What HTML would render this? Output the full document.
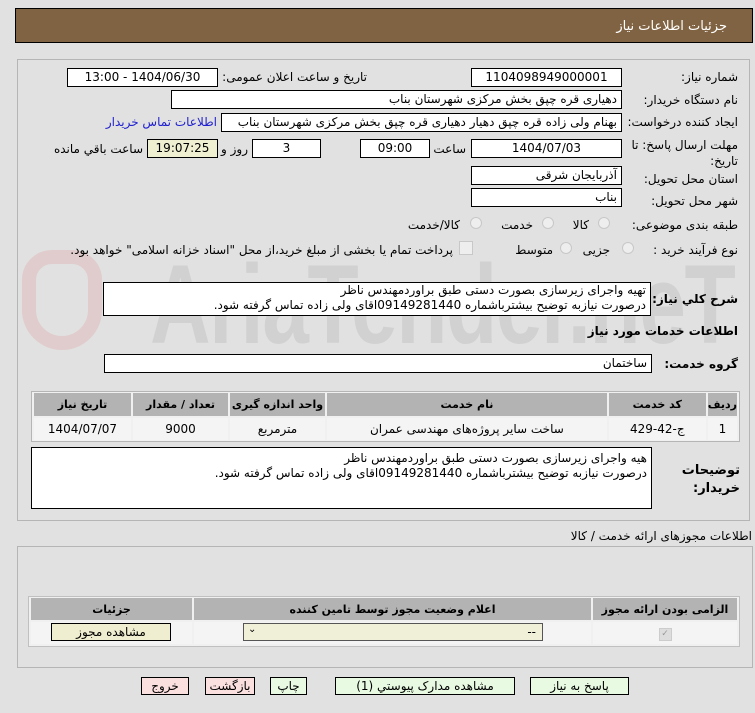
<!DOCTYPE html>
<html><head><meta charset="utf-8"><style>
body{margin:0;width:755px;height:713px;background:#e1e1e1;font-family:"DejaVu Sans","Liberation Sans",sans-serif;font-size:12px;color:#000;position:relative;overflow:hidden}
.a{position:absolute}
.f{position:absolute;background:#fff;border:1px solid #000;box-sizing:border-box;height:19px;line-height:17px;direction:rtl;padding:0 4px;white-space:nowrap;overflow:hidden}
.c{text-align:center}
.l{position:absolute;direction:rtl;white-space:nowrap;text-align:right}
.r{position:absolute;width:12px;height:12px;border-radius:50%;border:1px solid #c8c8c8;background:#eee;box-sizing:border-box}
.btn{position:absolute;border:1px solid #000;box-sizing:border-box;height:18px;line-height:16px;text-align:center;background:#e8fbe2;white-space:nowrap}
table{border-collapse:separate;border-spacing:2px;direction:rtl}
td,th{padding:0;text-align:center}
</style></head><body>
<div class="a" style="left:15px;top:8px;width:738px;height:35px;background:#806342;border:1px solid #000;box-sizing:border-box"></div>
<div class="l" style="right:28px;top:19px;color:#fff;font-size:13px">جزئیات اطلاعات نیاز</div>

<div class="a" style="left:17px;top:59px;width:733px;height:462px;border:1px solid #b5b5b5;box-sizing:border-box"></div>
<div class="a" style="left:150px;top:240px;font-size:112px;font-family:'Liberation Sans',sans-serif;font-weight:bold;color:rgba(0,0,0,0.07);letter-spacing:-2px;transform:scaleX(0.75);transform-origin:left">AriaTender.neT</div>
<div class="a" style="left:22px;top:250px;width:80px;height:100px;border:14px solid rgba(220,60,60,0.12);border-radius:30px 30px 40px 40px;box-sizing:border-box"></div>

<div class="l" style="right:17px;top:70px">شماره نیاز:</div>
<div class="f c" style="left:471px;top:68px;width:151px">1104098949000001</div>
<div class="l" style="right:388px;top:70px">تاریخ و ساعت اعلان عمومی:</div>
<div class="f c" style="left:67px;top:68px;width:151px">1404/06/30 - 13:00</div>

<div class="l" style="right:17px;top:93px">نام دستگاه خریدار:</div>
<div class="f" style="left:171px;top:90px;width:451px">دهیاری قره چپق بخش مرکزی شهرستان بناب</div>

<div class="l" style="right:17px;top:115px">ایجاد کننده درخواست:</div>
<div class="f" style="left:221px;top:113px;width:401px">بهنام ولی زاده قره چپق دهیار دهیاری قره چپق بخش مرکزی شهرستان بناب</div>
<div class="l" style="right:538px;top:115px;color:#2020d0">اطلاعات تماس خریدار</div>

<div class="l" style="right:17px;top:137px;line-height:16px">مهلت ارسال پاسخ: تا<br>تاریخ:</div>
<div class="f c" style="left:471px;top:139px;width:151px">1404/07/03</div>
<div class="l" style="right:289px;top:142px">ساعت</div>
<div class="f c" style="left:360px;top:139px;width:70px">09:00</div>
<div class="f c" style="left:252px;top:139px;width:69px">3</div>
<div class="l" style="right:507px;top:142px">روز و</div>
<div class="f c" style="left:147px;top:139px;width:71px;background:#efefd2">19:07:25</div>
<div class="l" style="right:612px;top:142px">ساعت باقي مانده</div>

<div class="l" style="right:17px;top:172px">استان محل تحویل:</div>
<div class="f" style="left:471px;top:166px;width:151px">آذربایجان شرقی</div>
<div class="l" style="right:17px;top:194px">شهر محل تحویل:</div>
<div class="f" style="left:471px;top:188px;width:151px">بناب</div>

<div class="l" style="right:17px;top:218px">طبقه بندی موضوعی:</div>
<div class="r" style="left:598px;top:217px"></div><div class="l" style="right:166px;top:218px">کالا</div>
<div class="r" style="left:542px;top:217px"></div><div class="l" style="right:222px;top:218px">خدمت</div>
<div class="r" style="left:470px;top:217px"></div><div class="l" style="right:295px;top:218px">کالا/خدمت</div>

<div class="l" style="right:17px;top:243px">نوع فرآیند خرید :</div>
<div class="r" style="left:622px;top:242px"></div><div class="l" style="right:145px;top:243px">جزیی</div>
<div class="r" style="left:560px;top:242px"></div><div class="l" style="right:202px;top:243px">متوسط</div>
<div class="a" style="left:459px;top:241px;width:12px;height:12px;border:1px solid #c8c8c8;background:#eee"></div>
<div class="l" style="right:302px;top:243px">پرداخت تمام یا بخشی از مبلغ خرید،از محل "اسناد خزانه اسلامی" خواهد بود.</div>

<div class="l" style="right:17px;top:292px;font-weight:bold;font-size:12px">شرح کلي نیاز:</div>
<div class="f" style="left:103px;top:282px;width:548px;height:34px;line-height:15px;white-space:normal">تهیه واجرای زیرسازی بصورت دستی طبق براوردمهندس ناظر<br>درصورت نیازبه توضیح بیشترباشماره 09149281440اقای ولی زاده تماس گرفته شود.</div>
<div class="l" style="right:17px;top:324px;font-weight:bold;font-size:12px">اطلاعات خدمات مورد نیاز</div>
<div class="l" style="right:17px;top:357px;font-weight:bold;font-size:12px">گروه خدمت:</div>
<div class="f" style="left:104px;top:354px;width:548px">ساختمان</div>

<div class="a" style="left:31px;top:391px;width:709px;height:51px;border:1px solid #b5b5b5;box-sizing:border-box;background:#f0f0f0"></div>
<table class="a" style="left:32px;top:391px;width:707px;font-size:11px">
<tr style="background:#b3b3b3;height:23px;font-weight:bold"><th style="width:29px">ردیف</th><th style="width:97px">کد خدمت</th><th>نام خدمت</th><th style="width:95px">واحد اندازه گیری</th><th style="width:95px">تعداد / مقدار</th><th style="width:97px">تاریخ نیاز</th></tr>
<tr style="background:#f4f4f4;height:22px;font-size:12px"><td>1</td><td>ج-42-429</td><td>ساخت سایر پروژه‌های مهندسی عمران</td><td>مترمربع</td><td>9000</td><td>1404/07/07</td></tr>
</table>

<div class="l" style="right:15px;top:462px;font-weight:bold;font-size:13px;line-height:18px">توضیحات<br>خریدار:</div>
<div class="f" style="left:31px;top:447px;width:621px;height:62px;line-height:15px;white-space:normal;padding-top:3px">هیه واجرای زیرسازی بصورت دستی طبق براوردمهندس ناظر<br>درصورت نیازبه توضیح بیشترباشماره 09149281440اقای ولی زاده تماس گرفته شود.</div>

<div class="l" style="right:3px;top:529px">اطلاعات مجوزهای ارائه خدمت / کالا</div>
<div class="a" style="left:17px;top:546px;width:736px;height:122px;border:1px solid #b5b5b5;box-sizing:border-box"></div>
<div class="a" style="left:28px;top:596px;width:712px;height:51px;border:1px solid #c0c0c0;box-sizing:border-box;background:#f0f0f0"></div>
<table class="a" style="left:29px;top:596px;width:710px;font-size:11px">
<tr style="background:#b3b3b3;height:22px;font-weight:bold"><th style="width:144px">الزامی بودن ارائه مجوز</th><th>اعلام وضعیت مجوز توسط تامین کننده</th><th style="width:161px">جزئیات</th></tr>
<tr style="background:#f4f4f4;height:22px"><td><span style="display:inline-block;width:11px;height:11px;border:1px solid #ccc;background:#ddd;color:#999;font-size:9px;line-height:11px">✓</span></td><td></td><td></td></tr>
</table>
<div class="a" style="left:243px;top:623px;width:300px;height:18px;border:1px solid #555;box-sizing:border-box;background:#f0f0d8"><span style="position:absolute;right:6px;top:1px">--</span><span style="position:absolute;left:4px;top:0;font-size:10px">⌄</span></div>
<div class="btn" style="left:51px;top:623px;width:120px;background:#efeed0">مشاهده مجوز</div>

<div class="btn" style="left:530px;top:677px;width:99px">پاسخ به نیاز</div>
<div class="btn" style="left:335px;top:677px;width:180px">مشاهده مدارک پیوستي (1)</div>
<div class="btn" style="left:270px;top:677px;width:37px">چاپ</div>
<div class="btn" style="left:205px;top:677px;width:50px;background:#fbe0e0">بازگشت</div>
<div class="btn" style="left:141px;top:677px;width:48px;background:#fbe0e0">خروج</div>
</body></html>
